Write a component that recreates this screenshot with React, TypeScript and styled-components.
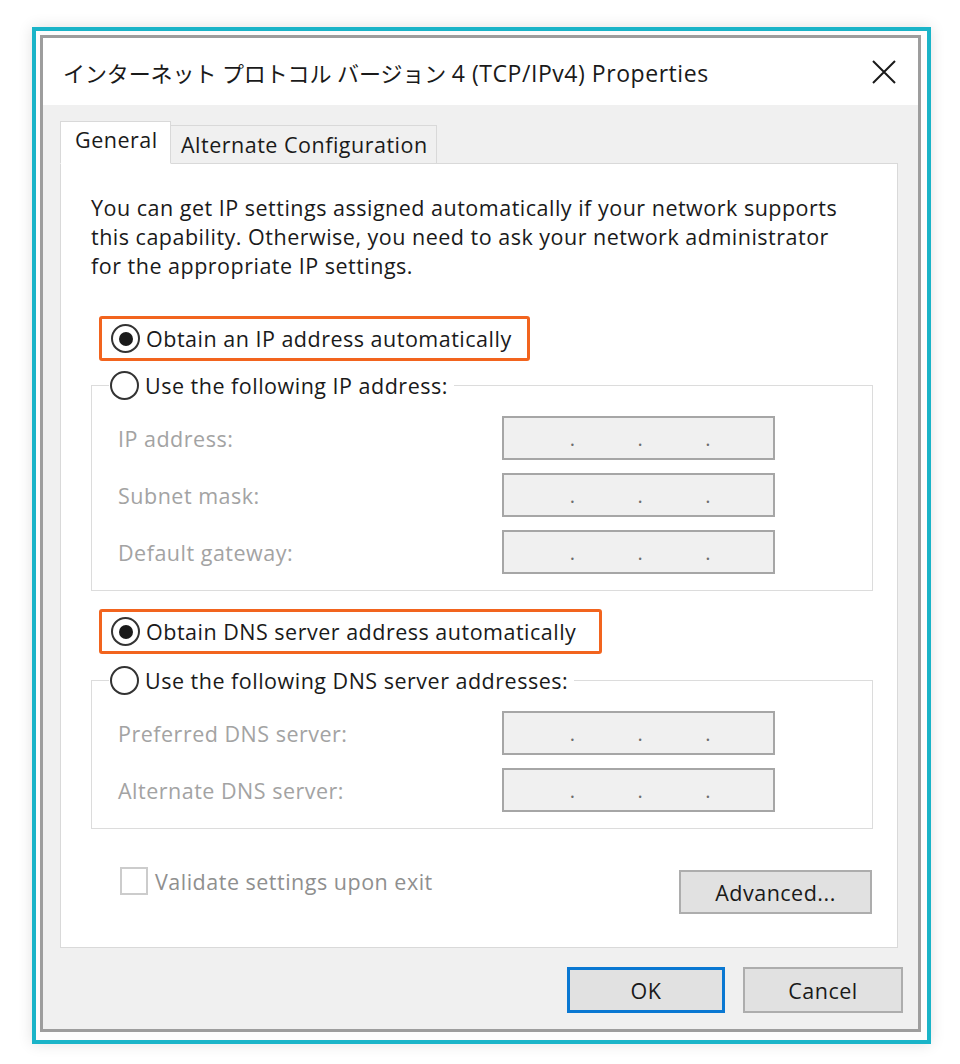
import React from "react";
import styled, { createGlobalStyle, css } from "styled-components";

const GlobalStyle = createGlobalStyle`
  html, body {
    margin: 0;
    padding: 0;
    background: #ffffff;
  }
  body {
    font-family: "Open Sans", "Noto Sans CJK JP", sans-serif;
    color: #1a1a1a;
  }
`;

const Page = styled.div`
  width: 960px;
  height: 1064px;
  padding: 27px 0 0 32px;
  box-sizing: border-box;
`;

const Frame = styled.div`
  width: 899px;
  height: 1017px;
  box-sizing: border-box;
  border: 4px solid #1ab4c8;
  padding: 4px 6px 8px 4px;
  background: #fdfdfd;
  box-shadow: 0 0 14px rgba(0, 0, 0, 0.12);
`;

const Window = styled.div`
  height: 100%;
  box-sizing: border-box;
  border: 3px solid #9d9d9d;
  display: flex;
  flex-direction: column;
  background: #f0f0f0;
`;

const TitleBar = styled.div`
  height: 67px;
  flex-shrink: 0;
  background: #ffffff;
  display: flex;
  align-items: center;
  justify-content: space-between;
  padding: 0 22px 0 20px;
`;

const Title = styled.div`
  font-size: 22px;
  color: #1a1a1a;
  letter-spacing: -0.1px;
  padding-top: 2px;
`;

const TitleLatin = styled.span`
  font-size: 23px;
  letter-spacing: 0.55px;
`;

const CloseButton = styled.button`
  border: none;
  background: transparent;
  padding: 0;
  width: 24px;
  height: 24px;
  display: flex;
  align-items: center;
  justify-content: center;
`;

const Body = styled.div`
  flex: 1;
  display: flex;
  flex-direction: column;
  padding: 16px 20px 16px 17px;
`;

const TabStrip = styled.div`
  display: flex;
  align-items: flex-end;
  height: 43px;
  position: relative;
  z-index: 1;
  margin-bottom: -1px;
`;

const uiText = css`
  font-size: 21.5px;
  letter-spacing: 0.5px;
`;

const Tab = styled.div<{ active?: boolean }>`
  box-sizing: border-box;
  ${uiText};
  display: flex;
  align-items: center;
  border: 1px solid #d9d9d9;
  ${(p) =>
    p.active
      ? css`
          width: 111px;
          height: 43px;
          padding: 0 0 6px 14px;
          background: #ffffff;
          border-bottom-color: #ffffff;
        `
      : css`
          width: 266px;
          height: 39px;
          padding: 0 0 0 10px;
          background: #f0f0f0;
          border-left: none;
        `}
`;

const Panel = styled.div`
  height: 785px;
  box-sizing: border-box;
  background: #ffffff;
  border: 1px solid #d9d9d9;
  padding: 29px 24px 0 30px;
  display: flex;
  flex-direction: column;
`;

const Description = styled.p`
  margin: 0;
  ${uiText};
  line-height: 29px;
  color: #1a1a1a;
`;

const Highlight = styled.div<{ width: number; top: number }>`
  width: ${(p) => p.width}px;
  height: 45px;
  box-sizing: border-box;
  border: 3px solid #f2641e;
  border-radius: 3px;
  display: flex;
  align-items: center;
  padding-left: 9px;
  margin: ${(p) => p.top}px 0 0 8px;
`;

const RadioRow = styled.label`
  display: flex;
  align-items: center;
  gap: 6px;
  ${uiText};
  color: #1a1a1a;
  height: 30px;
  background: #ffffff;
  white-space: nowrap;
`;

const RadioCircle = styled.span<{ checked?: boolean }>`
  width: 29px;
  height: 29px;
  box-sizing: border-box;
  border-radius: 50%;
  border: 2px solid #333333;
  background: #ffffff;
  display: flex;
  align-items: center;
  justify-content: center;
  flex-shrink: 0;
  &::after {
    content: "";
    width: 14px;
    height: 14px;
    border-radius: 50%;
    background: ${(p) => (p.checked ? "#1a1a1a" : "transparent")};
  }
`;

const GroupBox = styled.fieldset<{ top: number }>`
  margin: ${(p) => p.top}px 0 0 0;
  padding: 16px 0 16px 26px;
  border: 1.5px solid #dcdcdc;
  min-width: 0;
  width: 782px;
  box-sizing: border-box;
  display: flex;
  flex-direction: column;
  gap: 13px;
`;

const Legend = styled.legend`
  margin-left: -9px;
  padding: 0 6px 0 1px;
  background: #ffffff;
`;

const FieldRow = styled.div`
  display: flex;
  align-items: center;
  justify-content: space-between;
  padding-right: 97px;
`;

const FieldLabel = styled.span`
  ${uiText};
  color: #a3a3a3;
`;

const AddressBox = styled.div`
  width: 273px;
  height: 44px;
  box-sizing: border-box;
  border: 2px solid #a6a6a6;
  background: #f0f0f0;
  display: flex;
  align-items: center;
  font-size: 20px;
  color: #6d6d6d;
  padding-left: 2px;
`;

const Octet = styled.span`
  flex: 1;
`;

const Dot = styled.span`
  width: 4px;
  text-align: center;
`;

const Footer = styled.div`
  display: flex;
  align-items: flex-start;
  justify-content: space-between;
  margin-top: 37px;
  padding: 0 1px 0 29px;
`;

const CheckRow = styled.label`
  display: flex;
  align-items: center;
  gap: 7px;
  ${uiText};
  color: #8f8f8f;
  height: 30px;
`;

const CheckBox = styled.span`
  width: 28px;
  height: 28px;
  box-sizing: border-box;
  border: 2px solid #cccccc;
  background: #ffffff;
`;

const PushButton = styled.button<{ width: number; primary?: boolean; small?: boolean }>`
  width: ${(p) => p.width}px;
  height: ${(p) => (p.small ? 44 : 46)}px;
  margin-top: ${(p) => (p.small ? 4 : 0)}px;
  box-sizing: border-box;
  background: #e1e1e1;
  border: ${(p) => (p.primary ? "3px solid #0a78d2" : "2px solid #adadad")};
  font-family: "Open Sans", sans-serif;
  ${uiText};
  color: #1a1a1a;
  padding: 0;
`;

const ButtonBar = styled.div`
  display: flex;
  justify-content: flex-end;
  gap: 18px;
  margin: 19px -5px 0 0;
`;

function AddressField() {
  return (
    <AddressBox>
      <Octet />
      <Dot>.</Dot>
      <Octet />
      <Dot>.</Dot>
      <Octet />
      <Dot>.</Dot>
      <Octet />
    </AddressBox>
  );
}

function Radio({ checked, children }: { checked?: boolean; children: React.ReactNode }) {
  return (
    <RadioRow>
      <RadioCircle checked={checked} />
      {children}
    </RadioRow>
  );
}

const ipFields = ["IP address:", "Subnet mask:", "Default gateway:"];
const dnsFields = ["Preferred DNS server:", "Alternate DNS server:"];

export default function App() {
  return (
    <Page>
      <GlobalStyle />
      <Frame>
        <Window>
          <TitleBar>
            <Title>
              インターネット プロトコル バージョン <TitleLatin>4 (TCP/IPv4) Properties</TitleLatin>
            </Title>
            <CloseButton aria-label="Close">
              <svg width="24" height="24" viewBox="0 0 24 24">
                <path d="M1 1 L23 23 M23 1 L1 23" stroke="#1a1a1a" strokeWidth="2" fill="none" />
              </svg>
            </CloseButton>
          </TitleBar>
          <Body>
            <TabStrip>
              <Tab active>General</Tab>
              <Tab>Alternate Configuration</Tab>
            </TabStrip>
            <Panel>
              <Description>
                You can get IP settings assigned automatically if your network supports
                <br />
                this capability. Otherwise, you need to ask your network administrator
                <br />
                for the appropriate IP settings.
              </Description>

              <Highlight width={431} top={36}>
                <Radio checked>Obtain an IP address automatically</Radio>
              </Highlight>

              <GroupBox top={9}>
                <Legend>
                  <Radio>Use the following IP address:</Radio>
                </Legend>
                {ipFields.map((f) => (
                  <FieldRow key={f}>
                    <FieldLabel>{f}</FieldLabel>
                    <AddressField />
                  </FieldRow>
                ))}
              </GroupBox>

              <Highlight width={503} top={18}>
                <Radio checked>Obtain DNS server address automatically</Radio>
              </Highlight>

              <GroupBox top={11}>
                <Legend>
                  <Radio>Use the following DNS server addresses:</Radio>
                </Legend>
                {dnsFields.map((f) => (
                  <FieldRow key={f}>
                    <FieldLabel>{f}</FieldLabel>
                    <AddressField />
                  </FieldRow>
                ))}
              </GroupBox>

              <Footer>
                <CheckRow>
                  <CheckBox />
                  Validate settings upon exit
                </CheckRow>
                <PushButton width={193} small>
                  Advanced...
                </PushButton>
              </Footer>
            </Panel>
            <ButtonBar>
              <PushButton width={158} primary>
                OK
              </PushButton>
              <PushButton width={160}>Cancel</PushButton>
            </ButtonBar>
          </Body>
        </Window>
      </Frame>
    </Page>
  );
}
